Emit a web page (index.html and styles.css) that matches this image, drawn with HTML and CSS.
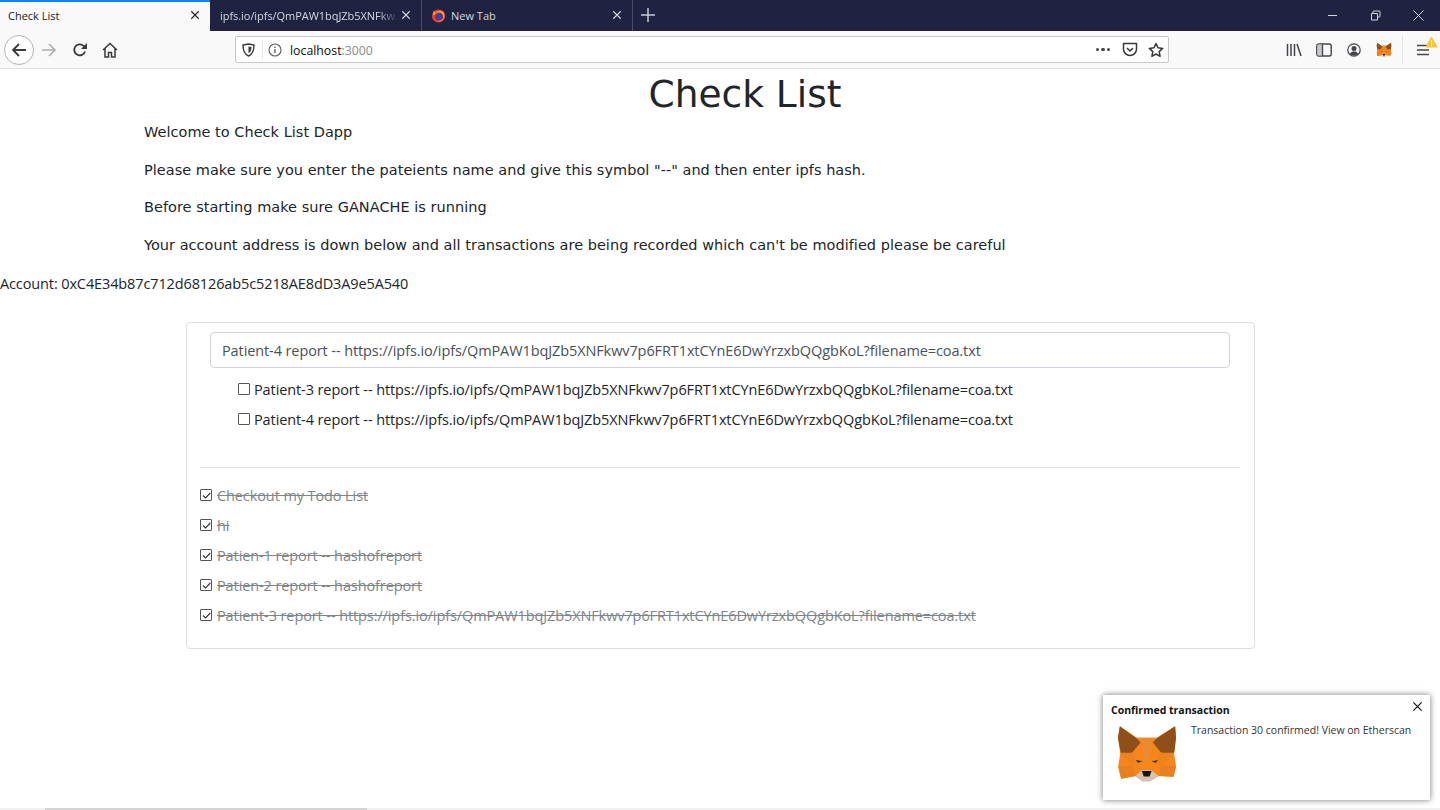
FILE: index.html
```html
<!DOCTYPE html>
<html lang="en">
<head>
<meta charset="utf-8">
<title>Check List</title>
<link rel="stylesheet" href="styles.css">
</head>
<body>
<svg class="defs" width="0" height="0" aria-hidden="true">
  <defs>
    <symbol id="fox" viewBox="60 120 192 185">
      <polygon fill="#f6851b" points="66,165 72,130 125,165 185,165 243,130 246,165 240,215 246,255 238,286 192,284 165,300 142,300 120,284 76,292 67,255 73,215"/>
      <polygon fill="#ec8a2e" points="125,165 185,165 172,182 165,235 145,235 138,182"/>
      <polygon fill="#8f4f1a" points="72,130 125,168 136,180 110,212 75,212 66,165"/>
      <polygon fill="#8f4f1a" points="243,130 246,165 240,212 200,212 174,180 185,168"/>
      <polygon fill="#e9801f" points="67,255 110,250 120,284 76,292"/>
      <polygon fill="#e9801f" points="246,255 200,250 192,284 238,286"/>
      <polygon fill="#ee821d" points="110,212 122,234 142,238 128,243 110,250 73,215"/>
      <polygon fill="#ee821d" points="200,212 190,234 170,239 183,243 200,250 240,215"/>
      <polygon fill="#d7c1b3" points="120,284 140,266 170,266 192,284 165,300 142,300"/>
      <polygon fill="#161616" points="140,268 170,268 164,285 146,285"/>
      <polygon fill="#233447" points="122,234 142,238 128,243"/>
      <polygon fill="#233447" points="190,234 170,239 183,243"/>
    </symbol>
    <symbol id="close" viewBox="0 0 12 12">
      <path d="M1.5 1.5l9 9M10.5 1.5l-9 9" fill="none" stroke="currentColor" stroke-width="1.3"/>
    </symbol>
    <symbol id="tick" viewBox="0 0 13 13">
      <path d="M3 6.5l2.5 2.5 4.8-5" fill="none" stroke="#333" stroke-width="1.1"/>
    </symbol>
  </defs>
</svg>

<header class="browser">
  <div class="tabbar">
    <div class="tab tab-active">
      <span class="tab-title">Check List</span>
      <svg class="tab-close" width="10" height="10"><use href="#close"/></svg>
    </div>
    <div class="tab tab-second">
      <span class="tab-title tab-fade">ipfs.io/ipfs/QmPAW1bqJZb5XNFkw</span>
      <svg class="tab-close" width="10" height="10"><use href="#close"/></svg>
    </div>
    <div class="tab tab-third">
      <svg class="favicon" width="15" height="15" viewBox="0 0 16 16">
        <circle cx="8" cy="8.5" r="7" fill="#e8402a"/>
        <circle cx="8.6" cy="9" r="4.2" fill="#4a3a9c"/>
        <path d="M3 3c1 1 1 2 2 2 2-2 5-3 8-1 2 2 2 6 0 8-1 2-4 3-6 2 3 0 6-2 6-5 0-3-3-5-6-4-2 .5-3 2-4 3-1-1-1-3 0-5z" fill="#ff9f1c"/>
      </svg>
      <span class="tab-title">New Tab</span>
      <svg class="tab-close" width="10" height="10"><use href="#close"/></svg>
    </div>
    <svg class="new-tab" width="14" height="14" viewBox="0 0 14 14"><path d="M7 0v14M0 7h14" stroke="currentColor" stroke-width="1.5"/></svg>
    <div class="window-controls">
      <svg width="11" height="11" viewBox="0 0 11 11"><path d="M1 5.5h9" stroke="currentColor"/></svg>
      <svg width="11" height="11" viewBox="0 0 11 11"><path d="M3 3V1.5A.5.5 0 0 1 3.500 1h6a.5.5 0 0 1 .5.5v5a.5.5 0 0 1-.5.5H8M1.500 3.500h6v6.500h-6z" fill="none" stroke="currentColor"/></svg>
      <svg width="11" height="11" viewBox="0 0 11 11"><path d="M.5.500l10 10M10.500.500l-10 10" stroke="currentColor"/></svg>
    </div>
  </div>
  <div class="toolbar">
    <div class="back">
      <svg width="16" height="16" viewBox="0 0 16 16"><path d="M15 8H2M8 2L2 8l6 6" fill="none" stroke="#38383d" stroke-width="1.800"/></svg>
    </div>
    <div class="tool tool-fwd">
      <svg width="16" height="16" viewBox="0 0 16 16"><path d="M1 8h13M8 2l6 6-6 6" fill="none" stroke="#adadb0" stroke-width="1.500"/></svg>
    </div>
    <div class="tool tool-reload">
      <svg width="16" height="16" viewBox="0 0 16 16"><path d="M13 9.500A5.500 5.500 0 1 1 11.500 3.800L14 6" fill="none" stroke="#38383d" stroke-width="1.800"/><path d="M15 1v6H9z" fill="#38383d"/></svg>
    </div>
    <div class="tool">
      <svg width="16" height="16" viewBox="0 0 16 16"><path d="M1 8l7-6.500L15 8M3 6.500V15h3.500v-4.500h3V15H13V6.500" fill="none" stroke="#38383d" stroke-width="1.500"/></svg>
    </div>
    <div class="urlbar">
      <svg class="url-shield" width="13" height="14" viewBox="0 0 13 14"><path d="M1 2l5.500-1L12 2c0 5-1 9-5.500 11C2 11 1 7 1 2z" fill="none" stroke="#38383d" stroke-width="1.400"/><path d="M6.500 3.500L9.500 4c0 3-.8 5-3 6.300z" fill="#38383d"/></svg>
      <span class="url-sep"></span>
      <svg class="url-info" width="14" height="14" viewBox="0 0 14 14"><circle cx="7" cy="7" r="6" fill="none" stroke="#5b5b66" stroke-width="1.100"/><path d="M7 6v4.300M7 3.500v1.400" stroke="#5b5b66" stroke-width="1.300"/></svg>
      <span class="url-text">localhost<span class="url-port">:3000</span></span>
      <span class="url-dots">
        <i></i><i></i><i></i>
      </span>
      <svg class="url-pocket" width="16" height="15" viewBox="0 0 16 15"><path d="M1.500 1.500h13V7a6.500 6.500 0 0 1-13 0z" fill="none" stroke="#38383d" stroke-width="1.500" stroke-linejoin="round"/><path d="M5 6l3 3 3-3" fill="none" stroke="#38383d" stroke-width="1.500"/></svg>
      <svg class="url-star" width="16" height="16" viewBox="0 0 16 16"><path d="M8 1.500l2 4.300 4.700.6-3.500 3.200.9 4.700L8 12l-4.100 2.300.9-4.700L1.300 6.400 6 5.800z" fill="none" stroke="#38383d" stroke-width="1.500" stroke-linejoin="round"/></svg>
    </div>
    <div class="tools-right">
      <svg class="tr-lib" width="16" height="14" viewBox="0 0 16 14"><path d="M1.500 1v12M5 1v12M8.500 1v12M11 1l4 12" fill="none" stroke="#45454a" stroke-width="1.500"/></svg>
      <svg class="tr-side" width="16" height="14" viewBox="0 0 16 14"><rect x=".8" y="1" width="14.400" height="12" rx="2" fill="none" stroke="#45454a" stroke-width="1.400"/><rect x="1.500" y="1.500" width="5" height="11" fill="#c9c9cc"/><path d="M6.500 1v12" stroke="#45454a" stroke-width="1.300"/></svg>
      <svg class="tr-acct" width="14" height="14" viewBox="0 0 14 14"><circle cx="7" cy="7" r="6.200" fill="none" stroke="#45454a" stroke-width="1.200"/><circle cx="7" cy="5.500" r="2.500" fill="#45454a"/><path d="M2.800 11c1-2 2.500-2.500 4.200-2.500S10.200 9 11.200 11c-2 2-6.400 2-8.400 0z" fill="#45454a"/></svg>
      <svg class="tr-fox" width="16" height="15"><use href="#fox"/></svg>
      <span class="tr-sep"></span>
      <span class="tr-menu">
        <svg width="12" height="12" viewBox="0 0 12 12"><path d="M0 1.500h12M0 6h12M0 10.500h12" stroke="#45454a" stroke-width="1.500"/></svg>
        <svg class="tr-warn" width="13" height="12" viewBox="0 0 13 12"><path d="M6.500 1l5.500 10H1z" fill="#ffc42e" stroke="#ffc42e" stroke-linejoin="round"/><path d="M6.500 4v3.500M6.500 8.500v1.200" stroke="#fff" stroke-width="1.200"/></svg>
      </span>
    </div>
  </div>
</header>

<main class="page">
  <h1 class="title">Check List</h1>
  <section class="intro">
    <p>Welcome to Check List Dapp</p>
    <p>Please make sure you enter the pateients name and give this symbol "--" and then enter ipfs hash.</p>
    <p>Before starting make sure GANACHE is running</p>
    <p>Your account address is down below and all transactions are being recorded which can't be modified please be careful</p>
  </section>
  <p class="account">Account: 0xC4E34b87c712d68126ab5c5218AE8dD3A9e5A540</p>
  <section class="card">
    <input class="task-input" type="text" value="Patient-4 report -- https://ipfs.io/ipfs/QmPAW1bqJZb5XNFkwv7p6FRT1xtCYnE6DwYrzxbQQgbKoL?filename=coa.txt">
    <ul class="open-list">
      <li class="item"><span class="box"></span><span>Patient-3 report -- https://ipfs.io/ipfs/QmPAW1bqJZb5XNFkwv7p6FRT1xtCYnE6DwYrzxbQQgbKoL?filename=coa.txt</span></li>
      <li class="item"><span class="box"></span><span>Patient-4 report -- https://ipfs.io/ipfs/QmPAW1bqJZb5XNFkwv7p6FRT1xtCYnE6DwYrzxbQQgbKoL?filename=coa.txt</span></li>
    </ul>
    <hr class="rule">
    <ul class="done-list">
      <li class="item done"><span class="box"><svg width="13" height="13"><use href="#tick"/></svg></span><span class="done-text">Checkout my Todo List</span></li>
      <li class="item done"><span class="box"><svg width="13" height="13"><use href="#tick"/></svg></span><span class="done-text">hi</span></li>
      <li class="item done"><span class="box"><svg width="13" height="13"><use href="#tick"/></svg></span><span class="done-text">Patien-1 report -- hashofreport</span></li>
      <li class="item done"><span class="box"><svg width="13" height="13"><use href="#tick"/></svg></span><span class="done-text">Patien-2 report -- hashofreport</span></li>
      <li class="item done"><span class="box"><svg width="13" height="13"><use href="#tick"/></svg></span><span class="done-text">Patient-3 report -- https://ipfs.io/ipfs/QmPAW1bqJZb5XNFkwv7p6FRT1xtCYnE6DwYrzxbQQgbKoL?filename=coa.txt</span></li>
    </ul>
  </section>
</main>

<aside class="toast">
  <div class="toast-title">Confirmed transaction</div>
  <svg class="toast-close" width="11" height="11"><use href="#close"/></svg>
  <div class="toast-body">
    <svg class="toast-fox" width="62" height="60"><use href="#fox"/></svg>
    <p class="toast-text">Transaction 30 confirmed! View on Etherscan</p>
  </div>
</aside>

<div class="hscroll"><div class="hthumb"></div></div>
</body>
</html>
```
FILE: styles.css
```css
* { box-sizing: border-box; }
html, body { margin: 0; height: 810px; overflow: hidden; background: #fff; }
body { position: relative; font-family: "Open Sans", "Noto Sans", sans-serif; color: #212529; }
.defs { position: absolute; }

/* browser chrome */
.tabbar { display: flex; align-items: stretch; height: 31px; background: #1f2341; color: #d6d7de; font-size: 11px; }
.tab { display: flex; align-items: center; width: 211px; padding: 0 10px 1px; border-right: 1px solid #4a4d66; }
.tab-active { width: 210px; padding: 0 10px 3px 8px; background: #f9f9fa; color: #202124; border-top: 2px solid #0a84ff; border-right: 0; }
.tab-second { width: 212px; }
.tab-third { width: 211px; padding-left: 9px; }
.tab-title { flex: 1; white-space: nowrap; overflow: hidden; }
.tab-fade { letter-spacing: -.05px; -webkit-mask-image: linear-gradient(90deg, #000 88%, transparent); mask-image: linear-gradient(90deg, #000 88%, transparent); }
.tab-close { flex: none; margin: 0 0 0 10px; }
.tab-second .tab-close { margin-left: 2px; }
.favicon { flex: none; margin-right: 5px; }
.new-tab { align-self: center; margin: 0 0 1px 8px; color: #c9cad3; }
.window-controls { display: flex; align-items: center; gap: 32px; margin-left: auto; padding: 0 16px 1px 0; color: #d6d7de; }

.toolbar { display: flex; align-items: center; height: 38px; padding-left: 4px; background: #f9f9fa; border-bottom: 1px solid #e0e0e2; }
.back { display: flex; align-items: center; justify-content: center; width: 30px; height: 30px; background: #fff; border: 1px solid #b4b4b6; border-radius: 50%; }
.tool { display: flex; align-items: center; justify-content: center; width: 30px; }
.tool-reload { margin-left: 1px; }
.urlbar { display: flex; align-items: center; width: 934px; height: 27px; margin-left: 110px; background: #fff; border: 1px solid #c8c8ca; border-radius: 2px; }
.url-shield { flex: none; margin-left: 6px; }
.url-sep { flex: none; width: 1px; height: 20px; margin-left: 7px; background: #e8e8ea; }
.url-info { flex: none; margin-left: 5px; }
.url-text { flex: 1; margin-left: 8px; padding-top: 1px; font-size: 12.300px; color: #0c0c0d; }
.url-port { color: #8a8a8e; }
.url-dots { display: flex; gap: 2px; margin-right: 12px; }
.url-dots i { width: 3.500px; height: 3.500px; border-radius: 50%; background: #45454a; }
.url-pocket { flex: none; margin-right: 10px; }
.url-star { flex: none; margin-right: 4px; }
.tools-right { display: flex; align-items: center; flex: 1; padding-left: 117px; }
.tr-lib { flex: none; }
.tr-side { flex: none; margin-left: 14px; }
.tr-acct { flex: none; margin-left: 15px; }
.tr-fox { flex: none; margin-left: 15px; }
.tr-sep { flex: none; width: 1px; height: 30px; margin-left: 10px; background: #e6e6e8; }
.tr-menu { position: relative; display: flex; margin-left: 14px; }
.tr-warn { position: absolute; left: 8px; top: -8px; }

/* page */
.page { display: flex; flex-direction: column; }
.title { margin: 0 0 2px; padding: 1px 0 0 50px; font: 400 37.500px/48px "DejaVu Sans", sans-serif; text-align: center; color: #212529; }
.intro { padding: 0 0 0 144px; font: 14.500px/24px "DejaVu Sans", sans-serif; letter-spacing: .02px; }
.intro p { margin: 0 0 13.500px; white-space: nowrap; }
.account { margin: 2px 0 26px; font-size: 14.500px; letter-spacing: -.12px; line-height: 24px; color: #212529; }
.card { align-self: flex-start; width: 1069px; height: 327px; margin-left: 186px; padding: 9px 14px 9px 13px; background: #fff; border: 1px solid #dfdfdf; border-radius: 4px; }
.task-input { display: block; width: 1020px; height: 36px; margin-left: 10px; padding: 0 11px; font: 14.500px "Open Sans", sans-serif; letter-spacing: -.1px; color: #495057; background: #fff; border: 1px solid #ced4da; border-radius: 4px; }
.open-list, .done-list { margin: 0; padding: 0; list-style: none; }
.open-list { padding: 6px 0 0 38px; }
.done-list { padding-top: 12px; }
.item { display: flex; align-items: center; gap: 4px; height: 30px; font-size: 14.500px; letter-spacing: -.1px; white-space: nowrap; }
.box { flex: none; display: block; width: 12px; height: 12px; background: #fff; border: 1px solid #555; border-radius: 1px; margin-top: -1px; }
.box svg { display: block; margin: -1px; }
.done-text { margin-left: 1px; text-decoration: line-through; color: #808589; }
.rule { height: 1px; margin: 33px 0 0; background: #e3e3e3; border: 0; }

/* toast */
.toast { position: absolute; left: 1103px; top: 695px; width: 327px; height: 105px; padding: 7px 8px; background: #fff; box-shadow: 0 0 6px rgba(0,0,0,.55); }
.toast-title { font-size: 10.500px; font-weight: 700; line-height: 16px; color: #111; }
.toast-close { position: absolute; right: 7px; top: 6px; color: #111; }
.toast-body { display: flex; align-items: flex-start; margin-top: 4px; }
.toast-fox { flex: none; margin: 1px 0 0 5px; }
.toast-text { margin: 0 0 0 13px; font-size: 10.500px; line-height: 16px; color: #333; white-space: nowrap; }

.hscroll { position: absolute; left: 0; right: 0; bottom: 0; height: 2px; background: #f1f1f1; }
.hthumb { width: 322px; height: 2px; margin-left: 45px; background: #d4d4d4; }
```
